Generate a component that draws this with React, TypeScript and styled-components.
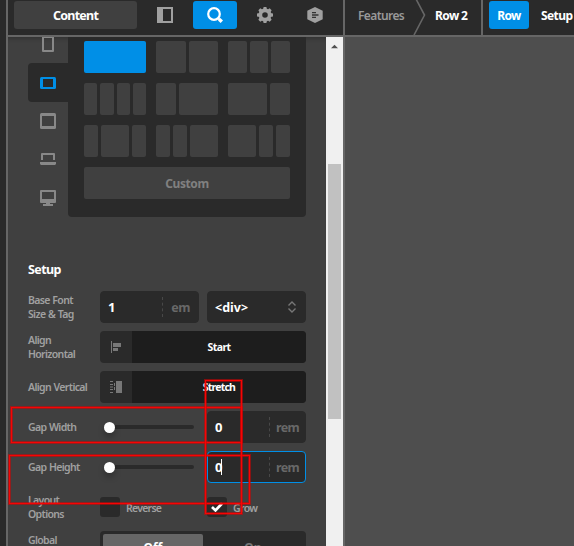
import React from 'react';
import styled, { createGlobalStyle, css } from 'styled-components';

const Global = createGlobalStyle`
  * { box-sizing: border-box; }
  body { margin: 0; background: #4e4e4e; overflow: hidden; }
  svg { display: block; flex: none; }
`;

const Shell = styled.div`
  position: relative;
  display: flex;
  width: 574px;
  height: 546px;
  overflow: hidden;
  font-family: 'Noto Sans', sans-serif;
  font-weight: 700;
  color: #fff;
`;

const Edge = styled.div`
  flex: none;
  width: 8px;
  background: #2a2a2a;
  border-right: 2px solid #666;
`;

const Panel = styled.div`
  flex: none;
  display: flex;
  flex-direction: column;
  width: 337px;
  border-right: 2px solid #666;
`;

const Bar = styled.div`
  flex: none;
  display: flex;
  align-items: flex-start;
  height: 37px;
  padding-top: 1px;
  background: #2a2a2a;
  border-bottom: 2px solid #666;
`;

const BarButton = styled.div<{ $w: number; $ml?: number; $bg?: string }>`
  flex: none;
  display: flex;
  align-items: center;
  justify-content: center;
  width: ${p => p.$w}px;
  height: 28px;
  margin-left: ${p => p.$ml ?? 0}px;
  border-radius: 3px;
  background: ${p => p.$bg ?? 'transparent'};
`;

const Text = styled.span<{ $size: number; $color?: string; $ls?: number; $weight?: number; $y?: number }>`
  font-size: ${p => p.$size}px;
  line-height: 16px;
  color: ${p => p.$color ?? '#fff'};
  letter-spacing: ${p => p.$ls ?? 0}px;
  font-weight: ${p => p.$weight ?? 700};
  padding-top: ${p => p.$y ?? 0}px;
  white-space: nowrap;
`;

const PanelBody = styled.div`
  flex: 1;
  display: flex;
  min-height: 0;
`;

const Controls = styled.div`
  flex: 1;
  overflow: hidden;
  padding: 0 20px;
  background: #404040;
  box-shadow: inset 0 5px 5px -4px rgba(0, 0, 0, 0.3);
`;

const Scrollbar = styled.div`
  flex: none;
  width: 17px;
  padding: 7px 2px 0;
  background: #f0f0f0;
`;

const Thumb = styled.div`
  height: 255px;
  margin-top: 115px;
  background: #c1c1c1;
`;

const LayoutPicker = styled.div`
  display: flex;
  height: 180px;
`;

const Devices = styled.div`
  width: 40px;
  margin-top: -12px;
`;

const Device = styled.div<{ $active?: boolean }>`
  display: flex;
  align-items: center;
  justify-content: center;
  height: 38.4px;
  border-radius: 4px 0 0 4px;
  ${p => p.$active && css`background: #2a2a2a;`}
`;

const Layouts = styled.div`
  display: grid;
  grid-template-columns: repeat(3, 62px);
  grid-auto-rows: 32px;
  gap: 10px;
  width: 238px;
  padding: 4px 16px 0;
  background: #2a2a2a;
  border-radius: 0 0 4px 4px;
`;

const Template = styled.div<{ $cols: string }>`
  display: grid;
  grid-template-columns: ${p => p.$cols};
  gap: 3px;
`;

const Cell = styled.div<{ $active?: boolean }>`
  border-radius: 2px;
  background: ${p => (p.$active ? '#008fe7' : '#404040')};
`;

const Custom = styled.div`
  grid-column: 1 / -1;
  display: flex;
  align-items: center;
  justify-content: center;
  border-radius: 2px;
  background: #404040;
`;

const Heading = styled.div`
  display: flex;
  align-items: center;
  height: 20px;
  margin: 42px 0 12px;
`;

const Row = styled.div<{ $h?: number; $mt?: number }>`
  display: flex;
  align-items: center;
  height: ${p => p.$h ?? 32}px;
  margin-top: ${p => p.$mt ?? 8}px;
`;

const Label = styled.div<{ $top?: boolean }>`
  flex: none;
  width: 72px;
  font-size: 10.5px;
  line-height: 14px;
  font-weight: 600;
  color: #a0a0a0;
  letter-spacing: -0.65px;
  word-spacing: 0.5px;
  white-space: nowrap;
  ${p => p.$top && css`
    align-self: flex-start;
    padding-top: 2px;
  `}
`;

const Field = styled.div<{ $focus?: boolean; $gap?: boolean }>`
  flex: none;
  display: flex;
  align-items: center;
  width: 99px;
  height: 32px;
  padding: 0 7px;
  margin-left: ${p => (p.$gap ? 8 : 0)}px;
  border: 1px solid ${p => (p.$focus ? '#008fe7' : '#2a2a2a')};
  border-radius: 4px;
  background: #2a2a2a;
`;

const Value = styled.div`
  display: flex;
  align-items: center;
  flex: 1;
`;

const Caret = styled.span`
  width: 1px;
  height: 16px;
  margin-left: -1px;
  background: #fff;
`;

const Unit = styled.div`
  display: flex;
  align-items: center;
  justify-content: center;
  width: 36px;
  height: 20px;
  margin-right: -7px;
  border-left: 1px dashed #484848;
`;

const Choice = styled.div`
  display: flex;
  width: 206px;
  height: 32px;
  border-radius: 4px;
  overflow: hidden;
  background: #2a2a2a;
`;

const ChoiceIcon = styled.div`
  display: flex;
  align-items: center;
  justify-content: center;
  width: 32px;
`;

const ChoiceValue = styled.div`
  flex: 1;
  display: flex;
  align-items: center;
  justify-content: center;
  background: #1d1d1d;
`;

const Slider = styled.div`
  flex: none;
  display: flex;
  align-items: center;
  width: 90px;
  height: 4px;
  margin: 0 13px 0 4px;
  border-radius: 2px;
  background: #2a2a2a;
`;

const Knob = styled.div`
  width: 11px;
  height: 11px;
  border-radius: 50%;
  background: #fff;
  box-shadow: 0 4px 6px rgba(0, 0, 0, 0.25);
`;

const Option = styled.div`
  flex: none;
  display: flex;
  align-items: center;
  gap: 6px;
  width: 107px;
  height: 20px;
`;

const Box = styled.div`
  flex: none;
  display: flex;
  align-items: center;
  justify-content: center;
  width: 20px;
  height: 20px;
  border-radius: 3px;
  background: #2a2a2a;
`;

const Toggle = styled.div`
  display: flex;
  width: 206px;
  height: 32px;
  padding: 3px;
  border-radius: 4px;
  background: #2a2a2a;
`;

const ToggleItem = styled.div<{ $on?: boolean }>`
  display: flex;
  align-items: center;
  justify-content: center;
  width: 101px;
  border-radius: 2px;
  ${p => p.$on && css`background: #666;`}
`;

const Workspace = styled.div`
  flex: 1;
  min-width: 0;
  background: #4e4e4e;
`;

const Crumb = styled.div<{ $w: number; $pl: number }>`
  flex: none;
  display: flex;
  align-items: center;
  width: ${p => p.$w}px;
  height: 28px;
  padding-left: ${p => p.$pl}px;
`;

const Divider = styled.div`
  flex: none;
  width: 2px;
  height: 36px;
  margin-top: -1px;
  background: #666;
`;

const ChevronWrap = styled.div`
  flex: none;
  height: 35px;
  margin-top: -1px;
`;

const Mark = styled.div<{ $x: number; $y: number; $w: number; $h: number }>`
  position: absolute;
  left: ${p => p.$x}px;
  top: ${p => p.$y}px;
  width: ${p => p.$w}px;
  height: ${p => p.$h}px;
  border: 1px solid #f80404;
  box-shadow: 0 0 0 1px rgba(215, 0, 0, 0.55), inset 0 0 0 1px rgba(215, 0, 0, 0.55);
`;

const templates = [
  [1], [1, 1], [1, 1, 1],
  [1, 1, 1, 1], [1, 2], [2, 1],
  [1, 2, 1], [1, 1, 2], [2, 1, 1],
];

const Icon = ({ size = 16, children }: { size?: number; children: React.ReactNode }) => (
  <svg width={size} height={size} viewBox={`0 0 ${size} ${size}`} fill="none">{children}</svg>
);

const gearTeeth = [0, 45, 90, 135, 180, 225, 270, 315];

const SliderRow = ({ label, focus }: { label: string; focus?: boolean }) => (
  <Row>
    <Label>{label}</Label>
    <Slider><Knob /></Slider>
    <Field $focus={focus}>
      <Value><Text $size={13}>0</Text>{focus && <Caret />}</Value>
      <Unit><Text $size={12.5} $ls={-0.6} $color="#686868" $y={1}>rem</Text></Unit>
    </Field>
  </Row>
);

export default function App() {
  return (
    <Shell>
      <Global />
      <Edge />
      <Panel>
        <Bar>
          <BarButton $w={123} $ml={6} $bg="#404040"><Text $size={12.5} $ls={-0.75} $y={2}>Content</Text></BarButton>
          <BarButton $w={16} $ml={20}>
            <Icon><path d="M1 1h14v14H1z" stroke="#a0a0a0" strokeWidth="2" /><path d="M0 0h6v16H0z" fill="#a0a0a0" /></Icon>
          </BarButton>
          <BarButton $w={44} $ml={20} $bg="#008fe7">
            <Icon><circle cx="7" cy="7" r="5.8" stroke="#fff" strokeWidth="2.2" /><path d="M11 11l2.2 2.2" stroke="#fff" strokeWidth="2" /><path d="M12.2 12.2l2.6 2.6" stroke="#fff" strokeWidth="3.4" /></Icon>
          </BarButton>
          <BarButton $w={16} $ml={20}>
            <Icon>
              {gearTeeth.map(a => <path key={a} d="M5.9 3L6.6 0h2.8l.7 3z" fill="#a0a0a0" transform={`rotate(${a} 8 8)`} />)}
              <circle cx="8" cy="8" r="4.6" stroke="#a0a0a0" strokeWidth="3.6" />
            </Icon>
          </BarButton>
          <BarButton $w={16} $ml={34}>
            <Icon>
              <path d="M8 0l7.7 3.8v8.4L8 16 .3 12.2V3.8z" fill="#a0a0a0" />
              <path d="M5 5.7h4M5 8h6.5M5 10.3h4" stroke="#333" strokeWidth="1.3" />
            </Icon>
          </BarButton>
        </Bar>
        <PanelBody>
          <Controls>
            <LayoutPicker>
              <Devices>
                <Device><Icon><path d="M3 1h10v14H3z" stroke="#888" strokeWidth="2" strokeLinejoin="round" /></Icon></Device>
                <Device $active><Icon><rect y="2" width="16" height="12" rx="1.5" fill="#008fe7" /><path d="M3 4h10v8H3z" fill="#2a2a2a" /></Icon></Device>
                <Device><Icon><rect width="16" height="16" rx="1.5" fill="#888" /><path d="M2 3h12v10H2z" fill="#404040" /></Icon></Device>
                <Device><Icon><path d="M2 9V3h12v6" stroke="#888" strokeWidth="2" strokeLinejoin="round" /><path d="M0 11h16v2l-1 1H1l-1-1z" fill="#888" /></Icon></Device>
                <Device><Icon><rect width="16" height="13" rx="1" fill="#888" /><path d="M2 2h12v7H2z" fill="#404040" /><path d="M6 13h4v1h3v2H3v-2h3z" fill="#888" /></Icon></Device>
              </Devices>
              <Layouts>
                {templates.map((cols, i) => (
                  <Template key={i} $cols={cols.map(c => `${c}fr`).join(' ')}>
                    {cols.map((_, j) => <Cell key={j} $active={i === 0} />)}
                  </Template>
                ))}
                <Custom><Text $size={12} $ls={-0.4} $color="#808080" $y={1}>Custom</Text></Custom>
              </Layouts>
            </LayoutPicker>

            <Heading><Text $size={12.5} $ls={-0.6} $y={1}>Setup</Text></Heading>
            <Row $mt={0}>
              <Label>Base Font<br />Size &amp; Tag</Label>
              <Field>
                <Value><Text $size={13}>1</Text></Value>
                <Unit><Text $size={12.5} $ls={-0.6} $color="#686868" $y={1}>em</Text></Unit>
              </Field>
              <Field $gap>
                <Value><Text $size={12.5} $y={1}>&lt;div&gt;</Text></Value>
                <svg width="10" height="12" viewBox="0 0 10 12" fill="none" stroke="#777" strokeWidth="1.4"><path d="M.5 4.5L4 1l3.5 3.5M.5 7.5L4 11l3.5-3.5" /></svg>
              </Field>
            </Row>
            <Row>
              <Label>Align<br />Horizontal</Label>
              <Choice>
                <ChoiceIcon><Icon><path d="M3.5 2v12" stroke="#777" /><path d="M5 4h8v4H5zM5 9h5v3H5z" fill="#777" /></Icon></ChoiceIcon>
                <ChoiceValue><Text $size={10.5} $ls={-0.6}>Start</Text></ChoiceValue>
              </Choice>
            </Row>
            <Row>
              <Label>Align Vertical</Label>
              <Choice>
                <ChoiceIcon><Icon><path d="M8 2h6v12H8z" fill="#777" /><path d="M2 2.5h4M2 5.5h3M2 8h4M2 10.5h3M2 13.5h4M6.5 4v8" stroke="#777" strokeDasharray="3 1" /></Icon></ChoiceIcon>
                <ChoiceValue><Text $size={10.5} $ls={-0.8}>Stretch</Text></ChoiceValue>
              </Choice>
            </Row>
            <SliderRow label="Gap Width" />
            <SliderRow label="Gap Height" focus />
            <Row $h={28} $mt={10}>
              <Label>Layout<br />Options</Label>
              <Option><Box /><Text $size={10.5} $ls={-0.75} $weight={600} $color="#a0a0a0" $y={1}>Reverse</Text></Option>
              <Option>
                <Box><svg width="12" height="10" viewBox="0 0 12 10"><path d="M1 5l3.5 3.4L11 1.5" fill="none" stroke="#fff" strokeWidth="2.7" /></svg></Box>
                <Text $size={10.5} $ls={-0.65} $weight={600} $color="#a0a0a0" $y={1}>Grow</Text>
              </Option>
            </Row>
            <Row $mt={10}>
              <Label $top>Global</Label>
              <Toggle>
                <ToggleItem $on><Text $size={12} $y={2}>Off</Text></ToggleItem>
                <ToggleItem><Text $size={12} $color="#777" $y={2}>On</Text></ToggleItem>
              </Toggle>
            </Row>
          </Controls>
          <Scrollbar>
            <svg width="13" height="5" viewBox="0 0 13 5"><path d="M3 4.2L6.5.7 10 4.2z" fill="#505050" /></svg>
            <Thumb />
          </Scrollbar>
        </PanelBody>
      </Panel>
      <Workspace>
        <Bar>
          <Crumb $w={68} $pl={13}><Text $size={12} $ls={-0.6} $weight={600} $color="#999" $y={2}>Features</Text></Crumb>
          <ChevronWrap><svg width="14" height="35" viewBox="0 0 14 35" fill="none" stroke="#666" strokeWidth="1.6"><path d="M3-1l8.5 16L1 35" /></svg></ChevronWrap>
          <Crumb $w={54} $pl={8}><Text $size={12} $ls={-0.6} $y={2}>Row 2</Text></Crumb>
          <Divider />
          <BarButton $w={40} $ml={6} $bg="#008fe7"><Text $size={12} $ls={-0.6} $y={2}>Row</Text></BarButton>
          <Crumb $w={45} $pl={12}><Text $size={12} $ls={-0.6} $y={2}>Setup</Text></Crumb>
        </Bar>
      </Workspace>
      <Mark $x={11} $y={407} $w={231} $h={36} />
      <Mark $x={9} $y={455} $w={241} $h={49} />
      <Mark $x={205} $y={380} $w={37} $h={134} />
    </Shell>
  );
}
